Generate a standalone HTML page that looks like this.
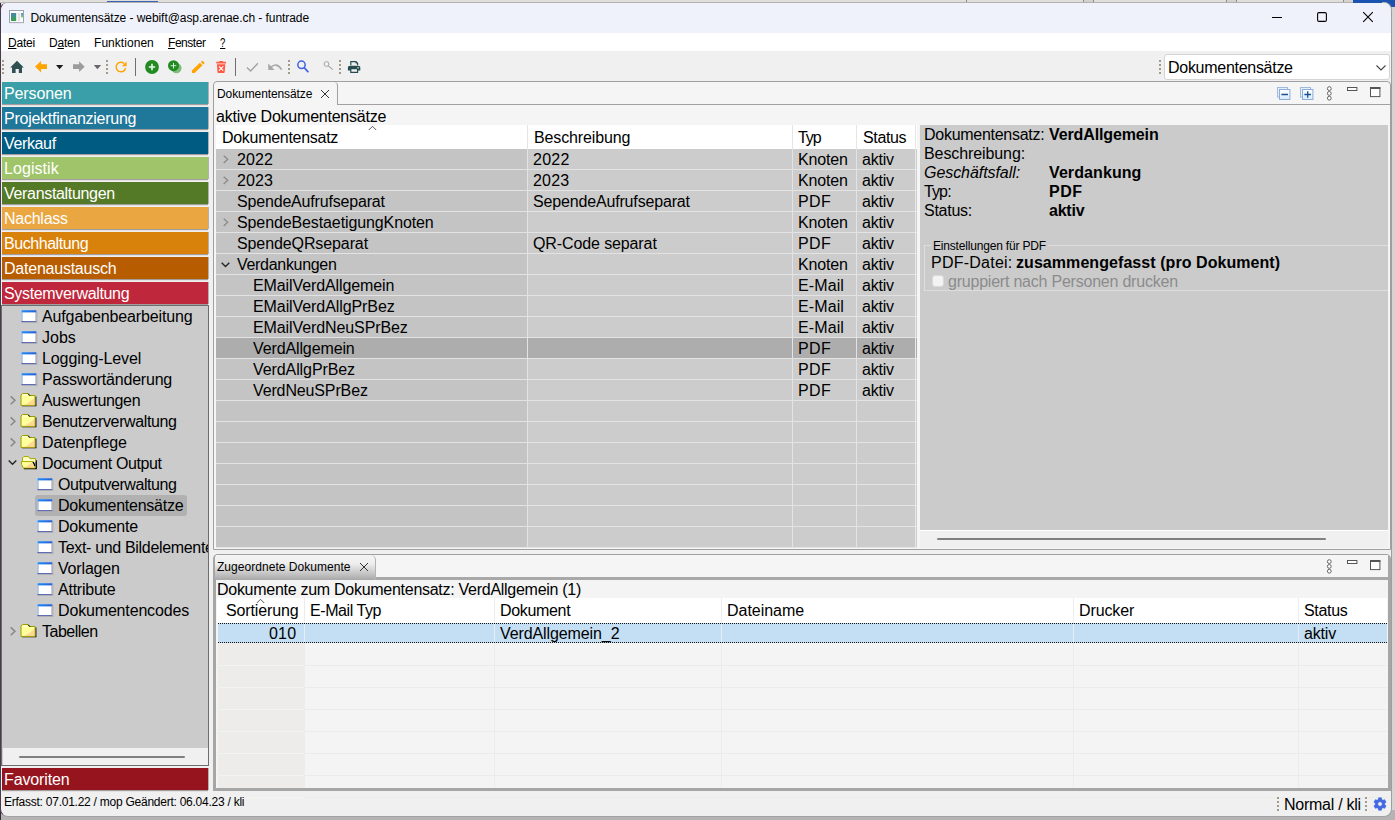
<!DOCTYPE html>
<html lang="de">
<head>
<meta charset="utf-8">
<title>Dokumentensätze - webift@asp.arenae.ch - funtrade</title>
<style>
*{box-sizing:border-box;margin:0;padding:0}
html,body{width:1395px;height:820px;overflow:hidden}
body{position:relative;background:#b4b4b4;font-family:"Liberation Sans",sans-serif;color:#000;font-size:16px;line-height:1}
.abs{position:absolute}
.ui{font-size:12px;white-space:nowrap}
.t{white-space:nowrap;font-size:16px}
/* ---------- backdrop behind window ---------- */
#backTop{left:0;top:0;width:1395px;height:8px;background:#e1dfdb}
#backTopLine{left:0;top:2px;width:1353px;height:1px;background:#bdbbb8}
#backBlueTab{left:107px;top:1px;width:51px;height:2px;background:#3c62b4}
#backBlue{left:1353px;top:0;width:42px;height:12px;background:#1a53b0}
#backRight{left:1391px;top:7px;width:4px;height:810px;background:#d6d4d2}
#backBottom{left:0;top:810px;width:1395px;height:10px;background:#b4b4b4}
#backLeft{left:0;top:3px;width:1px;height:817px;background:#3d2640}
/* ---------- window ---------- */
#win{left:0;top:2px;width:1392px;height:815px;background:#f0f0f0;border:1px solid #9e9e9e;border-left-color:#4a3a4e;border-top-color:#b4b2af;border-bottom-color:#a2a2a2;border-radius:8px;overflow:hidden}
#pg{left:-1px;top:-3px;width:1395px;height:820px}
#titlebar{left:1px;top:3px;width:1390px;height:30px;background:#eff2fa}
#menubar{left:1px;top:33px;width:1390px;height:18px;background:#fff}
#toolbar{left:1px;top:51px;width:1390px;height:30px;background:#f0f0f0}
.menu{top:37px;font-size:12px;white-space:nowrap}
.menu u{text-decoration-thickness:1px;text-underline-offset:1px}
/* ---------- sidebar ---------- */
.nav{left:2px;width:206px;height:22px;color:#fff;font-size:16px;line-height:23px;padding-left:2px;white-space:nowrap;box-shadow:0 1px 0 #a39d9d,1px 0 0 #b5afaf,0 2px 0 #e2e2e2}
#tree{left:1px;top:305px;width:208px;height:461px;background:#cbcbcb;border:1px solid #6d6d6d;overflow:hidden}
.ti{height:21px;line-height:21px;font-size:16px;white-space:nowrap}
</style>
</head>
<body>
<div class="abs" id="backTop"></div>
<div class="abs" id="backTopLine"></div>
<div class="abs" id="backBlueTab"></div>
<div class="abs" style="left:966px;top:0;width:1px;height:2px;background:#8a8a8a"></div>
<div class="abs" style="left:1083px;top:0;width:1px;height:2px;background:#8a8a8a"></div>
<div class="abs" style="left:1093px;top:0;width:1px;height:2px;background:#8a8a8a"></div>
<div class="abs" style="left:1226px;top:0;width:1px;height:2px;background:#8a8a8a"></div>
<div class="abs" style="left:1236px;top:0;width:1px;height:2px;background:#8a8a8a"></div>
<div class="abs" style="left:1343px;top:0;width:1px;height:2px;background:#8a8a8a"></div>
<div class="abs" style="left:1084px;top:0;width:9px;height:2px;background:#d4d2cf"></div>
<div class="abs" style="left:1227px;top:0;width:9px;height:2px;background:#d4d2cf"></div>
<div class="abs" style="left:1344px;top:0;width:9px;height:2px;background:#d4d2cf"></div>
<div class="abs" id="backBlue"></div>
<div class="abs" id="backRight"></div>
<div class="abs" id="backBottom"></div>
<div class="abs" id="backLeft"></div>

<div class="abs" id="win"><div class="abs" id="pg">
  <div class="abs" id="titlebar"></div>
  <div class="abs ui" style="left:30.4px;top:12px;letter-spacing:-0.061px">Dokumentensätze - webift@asp.arenae.ch - funtrade</div>
  <svg class="abs" style="left:8px;top:9px" width="18" height="16" viewBox="8 9 18 16">
    <defs><linearGradient id="tg" x1="0" y1="0" x2="0.3" y2="1"><stop offset="0" stop-color="#4a7fc4"/><stop offset="1" stop-color="#38a24e"/></linearGradient>
    <linearGradient id="tg2" x1="0" y1="0" x2="0" y2="1"><stop offset="0" stop-color="#5b8fd0"/><stop offset="0.7" stop-color="#7cc08a"/><stop offset="1" stop-color="#eef4ee"/></linearGradient></defs>
    <rect x="9.5" y="10.5" width="14" height="12" fill="#fdfdfd" stroke="#9aa2ac" stroke-width="1"/>
    <rect x="9.5" y="22.4" width="14.4" height="0.8" fill="#b9bec6"/>
    <rect x="11" y="13" width="5.2" height="8" fill="url(#tg)"/>
    <rect x="17.8" y="12.6" width="2.4" height="8.6" fill="#e2e2e2"/>
    <rect x="21" y="13" width="2" height="5" fill="url(#tg2)"/>
  </svg>
  <svg class="abs" style="left:1265px;top:8px" width="115" height="18" viewBox="1265 8 115 18">
    <path d="M1272 17.5 H1282" stroke="#000" stroke-width="1.1"/>
    <rect x="1317.6" y="12.6" width="8.8" height="8.8" rx="1.4" fill="none" stroke="#000" stroke-width="1.1"/>
    <path d="M1363.2 12.2 L1372.8 21.8 M1372.8 12.2 L1363.2 21.8" stroke="#000" stroke-width="1.1"/>
  </svg>
  <div class="abs" id="menubar"></div>
  <div class="abs menu" style="left:8px;top:37px;letter-spacing:-0.226px"><u>D</u>atei</div>
  <div class="abs menu" style="left:49px;top:37px;letter-spacing:-0.236px">D<u>a</u>ten</div>
  <div class="abs menu" style="left:94px;top:37px;letter-spacing:0.045px">Funktionen</div>
  <div class="abs menu" style="left:168px;top:37px;letter-spacing:-0.464px"><u>F</u>enster</div>
  <div class="abs menu" style="left:220px;top:37px;transform:scaleX(.8);transform-origin:left"><u>?</u></div>
  <div class="abs" id="toolbar"></div>
  <svg class="abs" style="left:0;top:51px" width="400" height="30" viewBox="0 51 400 30">
    <defs>
      <g id="grip"><rect x="0" y="60" width="2" height="2"/><rect x="0" y="64" width="2" height="2"/><rect x="0" y="68" width="2" height="2"/><rect x="0" y="72" width="2" height="2"/></g>
    </defs>
    <g fill="#a39a88"><use href="#grip" x="2"/><use href="#grip" x="106"/><use href="#grip" x="288"/><use href="#grip" x="339"/></g>
    <!-- home -->
    <path fill="#2f5050" d="M17 60.8 L23.8 67.4 L22 67.4 L22 73 L18.8 73 L18.8 69 L15.6 69 L15.6 73 L12 73 L12 67.4 L10.2 67.4 Z"/>
    <!-- back -->
    <path fill="#ffa500" d="M35 66.6 L41.1 61 L41.1 64.3 L47 64.3 L47 69 L41.1 69 L41.1 72.6 Z"/>
    <path fill="#1a1a1a" d="M56 65 L63.2 65 L59.6 69.2 Z"/>
    <!-- forward -->
    <path fill="#9c9c9c" d="M84.7 66.7 L79.1 61.3 L79.1 64.3 L73 64.3 L73 69 L79.1 69 L79.1 72.1 Z"/>
    <path fill="#66666c" d="M93.8 65 L101.1 65 L97.4 69.2 Z"/>
    <!-- refresh -->
    <path fill="none" stroke="#ffa500" stroke-width="1.5" d="M125.6 68.2 A4.8 4.8 0 1 1 124.2 63.5"/>
    <path fill="#ffa500" d="M126.6 61.6 L126.6 66.2 L121.9 66.2 Z"/>
    <!-- sep -->
    <rect x="135" y="58" width="1" height="18" fill="#6e6e6e"/>
    <!-- add -->
    <circle cx="152" cy="67" r="6.9" fill="#228b22"/>
    <path stroke="#eef8ee" stroke-width="1.6" d="M148.8 67 H155.2 M152 63.8 V70.2"/>
    <!-- add copy -->
    <circle cx="176.4" cy="68.1" r="5.2" fill="#7fba7f"/>
    <circle cx="173.5" cy="65.7" r="5.5" fill="#228b22"/>
    <path stroke="#e8f5e8" stroke-width="0.9" d="M170.7 65.7 H176.3 M173.5 62.9 V68.5"/>
    <!-- pencil -->
    <path fill="#ffa500" d="M191.9 73 L191.9 70.4 L199.9 62.7 L202.6 65.3 L194.6 73 Z M200.8 61.9 L201.9 60.9 Q202.4 60.5 202.9 61 L204.4 62.4 Q204.9 62.9 204.4 63.4 L203.4 64.4 Z"/>
    <!-- trash -->
    <path fill="#ff5a44" d="M219.3 60.9 H222.9 V61.8 H225.9 V63.4 H216.3 V61.8 H219.3 Z M216.9 64.2 H225.3 L224.7 72.2 Q224.6 73 223.8 73 H218.4 Q217.6 73 217.5 72.2 Z"/>
    <path stroke="#fff" stroke-width="1.2" d="M219 66.4 L223.2 70.7 M223.2 66.4 L219 70.7"/>
    <!-- sep -->
    <rect x="235" y="58" width="1" height="18" fill="#6e6e6e"/>
    <!-- check -->
    <path fill="none" stroke="#a2a2a2" stroke-width="1.4" d="M246.9 67.6 L250.6 71 L257.9 63.3"/>
    <!-- undo -->
    <path fill="none" stroke="#a8a8a8" stroke-width="1.6" d="M270.6 67.6 Q276.6 61.6 281.6 69.6"/>
    <path fill="#a8a8a8" d="M268.2 63.6 L268.2 70 L274.6 70 Z"/>
    <!-- search -->
    <circle cx="301.5" cy="64.8" r="3.7" fill="none" stroke="#3f62e6" stroke-width="1.5"/>
    <path stroke="#3f62e6" stroke-width="1.7" d="M304.2 67.6 L308.4 72.3"/>
    <circle cx="326.5" cy="64" r="2.4" fill="none" stroke="#a4a4a4" stroke-width="1"/>
    <path stroke="#a4a4a4" stroke-width="1.1" d="M328.3 65.8 L332.8 69.6"/>
    <!-- printer -->
    <path fill="#264d4d" d="M350.2 61 H356.2 L358.2 63 V65.4 H350.2 Z M349.4 66 H358.9 Q360.3 66 360.3 67.4 V70.6 H358.2 V72.9 H350.2 V70.6 H347.9 V67.4 Q347.9 66 349.4 66 Z"/>
    <path fill="#f0f0f0" d="M351.4 62.2 H355.6 V63.6 H357 V65.4 H351.4 Z M351.4 69.3 H357 V71.7 H351.4 Z"/>
    <rect x="357.4" y="67.2" width="1.4" height="1.2" fill="#f0f0f0"/>
  </svg>
  <!-- combo -->
  <svg class="abs" style="left:1159px;top:59px" width="3" height="16" viewBox="0 59 3 16"><g fill="#a39a88"><rect x="0" y="60" width="2" height="2"/><rect x="0" y="64" width="2" height="2"/><rect x="0" y="68" width="2" height="2"/><rect x="0" y="72" width="2" height="2"/></g></svg>
  <div class="abs" style="left:1164px;top:54px;width:226px;height:26px;background:#fff;border:1px solid #d4d4d4;border-radius:3px"></div>
  <div class="abs t" style="left:1168px;top:60px;letter-spacing:-0.282px">Dokumentensätze</div>
  <svg class="abs" style="left:1375px;top:64px" width="12" height="8" viewBox="0 0 12 8"><path d="M1.5 1.5 L6 6 L10.5 1.5" fill="none" stroke="#444" stroke-width="1.1"/></svg>
  <div class="abs nav" style="top:82px;background:#3a9fa8;letter-spacing:-0.108px">Personen</div>
  <div class="abs nav" style="top:107px;background:#1f7799;letter-spacing:-0.247px">Projektfinanzierung</div>
  <div class="abs nav" style="top:132px;background:#005b82;letter-spacing:-0.361px">Verkauf</div>
  <div class="abs nav" style="top:157px;background:#a0c46a;letter-spacing:0.061px">Logistik</div>
  <div class="abs nav" style="top:182px;background:#557a27;letter-spacing:-0.321px">Veranstaltungen</div>
  <div class="abs nav" style="top:207px;background:#eaa640;letter-spacing:-0.247px">Nachlass</div>
  <div class="abs nav" style="top:232px;background:#d8820c;letter-spacing:-0.443px">Buchhaltung</div>
  <div class="abs nav" style="top:257px;background:#b85c00;letter-spacing:-0.23px">Datenaustausch</div>
  <div class="abs nav" style="top:282px;background:#bf273c;letter-spacing:-0.346px">Systemverwaltung</div>
  <div class="abs" id="tree"></div>
  <svg width="0" height="0" style="position:absolute">
    <defs>
      <linearGradient id="wb" x1="0" y1="0" x2="1" y2="0"><stop offset="0" stop-color="#1f8af5"/><stop offset="1" stop-color="#2a5fd0"/></linearGradient>
      <g id="icoWin">
        <rect x="0" y="0" width="15" height="12" fill="#fff"/>
        <rect x="0" y="0" width="15" height="2.2" fill="url(#wb)"/>
        <rect x="0" y="2" width="1" height="10" fill="#7f9fd6"/>
        <rect x="0" y="11" width="15" height="1" fill="#3a4aa0"/>
        <rect x="14" y="2" width="1" height="10" fill="#8c94b4"/>
        <rect x="15" y="1" width="0.8" height="11.6" fill="#a9a9a9"/>
        <rect x="1" y="12" width="14.8" height="0.6" fill="#a9a9a9"/>
      </g>
      <g id="icoFolder">
        <path d="M1.6 13.3 H15.9 V3.4 H14.9 V12.4 H1.6 Z" fill="#000"/>
        <path d="M0.5 12.4 V2 L2 0.5 H7.2 L8.6 2.5 H14.5 V12.4 Z" fill="#ffff9c" stroke="#9c9c00" stroke-width="1"/>
        <path d="M1.4 2.4 L2.4 1.4 H6.8 L7.6 2.6 H1.4 Z" fill="#ffffe0"/>
        <path d="M7.6 0.6 L9.4 2.6" stroke="#000" stroke-width="1"/>
        <path d="M14 5 V11.9 H4.5 Z" fill="#ffc08a" opacity=".6"/>
      </g>
      <g id="icoFolderOpen">
        <path d="M3 13.2 H16 V4.2 H14.6 V12 H3 Z" fill="#000"/>
        <path d="M1.6 7 V2 L3 0.6 H7.6 L9 2.6 H14.6 V6" fill="#ffffc8" stroke="#a8a800" stroke-width="1"/>
        <path d="M0.6 5.6 H11.8 L13.4 8 L14.4 12 H2.6 L0.6 8.4 Z" fill="#ffff99" stroke="#a8a800" stroke-width="1"/>
        <path d="M11.2 6.4 L13.6 11.4 H4 Z" fill="#ffc890" opacity=".8"/>
        <path d="M12 5.8 L13.4 8.2 L13.8 10" stroke="#000" stroke-width="1.2" fill="none"/>
      </g>
      <path id="chevR" d="M0.7 0.4 L4.9 4.3 L0.7 8.2" fill="none" stroke="#878787" stroke-width="1.5"/>
      <path id="chevD" d="M0.7 0.7 L4.5 4.5 L8.3 0.7" fill="none" stroke="#262626" stroke-width="1.4"/>
    </defs>
  </svg>
  <div class="abs" id="treeIn" style="left:3px;top:306px;width:205px;height:442px;overflow:hidden">
    <div class="abs" style="left:32px;top:189px;width:152px;height:21px;background:#b1b1b1;border-radius:3px"></div>
    <svg class="abs" style="left:0;top:0" width="205" height="442" viewBox="3 306 205 442">
      <use href="#icoWin" x="21.5" y="310.2"/>
      <use href="#icoWin" x="21.5" y="331.2"/>
      <use href="#icoWin" x="21.5" y="352.2"/>
      <use href="#icoWin" x="21.5" y="373.2"/>
      <use href="#chevR" x="10" y="396"/><use href="#icoFolder" x="20.5" y="393"/>
      <use href="#chevR" x="10" y="417"/><use href="#icoFolder" x="20.5" y="414"/>
      <use href="#chevR" x="10" y="438"/><use href="#icoFolder" x="20.5" y="435"/>
      <use href="#chevD" x="8" y="459.8"/><use href="#icoFolderOpen" x="20.9" y="456"/>
      <use href="#icoWin" x="37.5" y="478.2"/>
      <use href="#icoWin" x="37.5" y="499.2"/>
      <use href="#icoWin" x="37.5" y="520.2"/>
      <use href="#icoWin" x="37.5" y="541.2"/>
      <use href="#icoWin" x="37.5" y="562.2"/>
      <use href="#icoWin" x="37.5" y="583.2"/>
      <use href="#icoWin" x="37.5" y="604.2"/>
      <use href="#chevR" x="10" y="627"/><use href="#icoFolder" x="20.5" y="624"/>
    </svg>
    <div class="abs ti" style="left:39px;top:0px;letter-spacing:-0.133px">Aufgabenbearbeitung</div>
    <div class="abs ti" style="left:39px;top:21px;letter-spacing:-0.006px">Jobs</div>
    <div class="abs ti" style="left:39px;top:42px;letter-spacing:-0.096px">Logging-Level</div>
    <div class="abs ti" style="left:39px;top:63px;letter-spacing:-0.212px">Passwortänderung</div>
    <div class="abs ti" style="left:39px;top:84px;letter-spacing:-0.341px">Auswertungen</div>
    <div class="abs ti" style="left:39px;top:105px;letter-spacing:-0.381px">Benutzerverwaltung</div>
    <div class="abs ti" style="left:39px;top:126px;letter-spacing:-0.128px">Datenpflege</div>
    <div class="abs ti" style="left:39px;top:147px;letter-spacing:-0.384px">Document Output</div>
    <div class="abs ti" style="left:55px;top:168px;letter-spacing:-0.432px">Outputverwaltung</div>
    <div class="abs ti" style="left:55px;top:189px;letter-spacing:-0.239px">Dokumentensätze</div>
    <div class="abs ti" style="left:55px;top:210px;letter-spacing:-0.201px">Dokumente</div>
    <div class="abs ti" style="left:55px;top:231px;letter-spacing:-0.325px">Text- und Bildelemente</div>
    <div class="abs ti" style="left:55px;top:252px;letter-spacing:-0.173px">Vorlagen</div>
    <div class="abs ti" style="left:55px;top:273px;letter-spacing:-0.234px">Attribute</div>
    <div class="abs ti" style="left:55px;top:294px;letter-spacing:-0.16px">Dokumentencodes</div>
    <div class="abs ti" style="left:39px;top:315px;letter-spacing:-0.505px">Tabellen</div>
  </div>
  <div class="abs" style="left:3px;top:748px;width:205px;height:17px;background:#f0f0f0"></div>
  <div class="abs" style="left:19px;top:756px;width:166px;height:2px;background:#808080;border-radius:1px"></div>
  <div class="abs nav" style="top:768px;background:#96141e;letter-spacing:-0.132px">Favoriten</div>
  <div class="abs" style="left:213px;top:81px;width:1178px;height:469px;background:#f5f5f5;border:1px solid #a0a0a0;border-radius:4px 4px 0 0"></div>
  <div class="abs" style="left:337px;top:104px;width:1053px;height:1px;background:#a0a0a0"></div>
  <div class="abs" style="left:214px;top:82px;width:124px;height:23px;border-right:1px solid #a0a0a0;border-top-right-radius:4px"></div>
  <div class="abs ui" style="left:217px;top:88px;letter-spacing:-0.092px">Dokumentensätze</div>
  <svg class="abs" style="left:320px;top:89px" width="10" height="10" viewBox="0 0 10 10"><path d="M1 1 L9 9 M9 1 L1 9" stroke="#333" stroke-width="1"/></svg>
  <svg class="abs" style="left:1270px;top:82px" width="120" height="22" viewBox="1270 82 120 22"><defs><linearGradient id="sq" x1="0" y1="0" x2="0" y2="1"><stop offset="0" stop-color="#fff"/><stop offset="1" stop-color="#d4ebff"/></linearGradient></defs><rect x="1277.5" y="87.5" width="10" height="9.6" fill="#e4f1fd" stroke="#a2bbdd" stroke-width="1"/><rect x="1279.5" y="89.5" width="10.4" height="10" fill="url(#sq)" stroke="#8facd6" stroke-width="1"/><path d="M1281.4 94.5 H1288" stroke="#1c4f8f" stroke-width="1.3"/><rect x="1300.5" y="87.5" width="10" height="9.6" fill="#e4f1fd" stroke="#a2bbdd" stroke-width="1"/><rect x="1302.5" y="89.5" width="10.4" height="10" fill="url(#sq)" stroke="#8facd6" stroke-width="1"/><path d="M1304.4 94.5 H1311" stroke="#1c4f8f" stroke-width="1.3"/><path d="M1307.7 91.2 V97.8" stroke="#1c4f8f" stroke-width="1.3"/><circle cx="1329.3" cy="88.6" r="1.9" fill="#fff" stroke="#555" stroke-width="0.9"/><circle cx="1329.3" cy="93.4" r="1.9" fill="#fff" stroke="#555" stroke-width="0.9"/><circle cx="1329.3" cy="98.2" r="1.9" fill="#fff" stroke="#555" stroke-width="0.9"/><rect x="1347.5" y="87.5" width="9.4" height="3" fill="#fff" stroke="#555" stroke-width="1"/><rect x="1370.5" y="88" width="9.4" height="8.6" fill="#fff" stroke="#555" stroke-width="1"/><rect x="1370" y="87" width="10.4" height="2" fill="#555"/></svg>
  <div class="abs t" style="left:216px;top:107px;line-height:19px;letter-spacing:-0.233px">aktive Dokumentensätze</div>
  <div class="abs" style="left:216px;top:125px;width:701px;height:24px;background:#fff"></div>
  <div class="abs" style="left:527px;top:125px;width:1px;height:24px;background:#e5e5e5"></div>
  <div class="abs" style="left:792px;top:125px;width:1px;height:24px;background:#e5e5e5"></div>
  <div class="abs" style="left:856px;top:125px;width:1px;height:24px;background:#e5e5e5"></div>
  <div class="abs" style="left:915px;top:125px;width:1px;height:24px;background:#e5e5e5"></div>
  <div class="abs t" style="left:222px;top:126px;line-height:24px;letter-spacing:-0.29px">Dokumentensatz</div>
  <div class="abs t" style="left:534px;top:126px;line-height:24px;letter-spacing:-0.138px">Beschreibung</div>
  <div class="abs t" style="left:798px;top:126px;line-height:24px;letter-spacing:-1.05px">Typ</div>
  <div class="abs t" style="left:863px;top:126px;line-height:24px;letter-spacing:-0.356px">Status</div>
  <svg class="abs" style="left:368px;top:125px" width="9" height="6" viewBox="0 0 9 6"><path d="M0.8 5 L4.5 1.3 L8.2 5" fill="none" stroke="#555" stroke-width="1"/></svg>
  <div class="abs" style="left:216px;top:149px;width:311px;height:399px;background:#c4c4c4"></div>
  <div class="abs" style="left:528px;top:149px;width:387px;height:399px;background:#cccccc"></div>
  <div class="abs" style="left:216px;top:338px;width:699px;height:20px;background:#adadad"></div>
  <div class="abs" style="left:216px;top:169px;width:699px;height:1px;background:#e3e3e3"></div>
  <div class="abs" style="left:216px;top:190px;width:699px;height:1px;background:#e3e3e3"></div>
  <div class="abs" style="left:216px;top:211px;width:699px;height:1px;background:#e3e3e3"></div>
  <div class="abs" style="left:216px;top:232px;width:699px;height:1px;background:#e3e3e3"></div>
  <div class="abs" style="left:216px;top:253px;width:699px;height:1px;background:#e3e3e3"></div>
  <div class="abs" style="left:216px;top:274px;width:699px;height:1px;background:#e3e3e3"></div>
  <div class="abs" style="left:216px;top:295px;width:699px;height:1px;background:#e3e3e3"></div>
  <div class="abs" style="left:216px;top:316px;width:699px;height:1px;background:#e3e3e3"></div>
  <div class="abs" style="left:216px;top:337px;width:699px;height:1px;background:#e3e3e3"></div>
  <div class="abs" style="left:216px;top:358px;width:699px;height:1px;background:#e3e3e3"></div>
  <div class="abs" style="left:216px;top:379px;width:699px;height:1px;background:#e3e3e3"></div>
  <div class="abs" style="left:216px;top:400px;width:699px;height:1px;background:#e3e3e3"></div>
  <div class="abs" style="left:216px;top:421px;width:699px;height:1px;background:#e3e3e3"></div>
  <div class="abs" style="left:216px;top:442px;width:699px;height:1px;background:#e3e3e3"></div>
  <div class="abs" style="left:216px;top:463px;width:699px;height:1px;background:#e3e3e3"></div>
  <div class="abs" style="left:216px;top:484px;width:699px;height:1px;background:#e3e3e3"></div>
  <div class="abs" style="left:216px;top:505px;width:699px;height:1px;background:#e3e3e3"></div>
  <div class="abs" style="left:216px;top:526px;width:699px;height:1px;background:#e3e3e3"></div>
  <div class="abs" style="left:216px;top:547px;width:699px;height:1px;background:#e3e3e3"></div>
  <div class="abs" style="left:527px;top:149px;width:1px;height:399px;background:#e3e3e3"></div>
  <div class="abs" style="left:792px;top:149px;width:1px;height:399px;background:#e3e3e3"></div>
  <div class="abs" style="left:856px;top:149px;width:1px;height:399px;background:#e3e3e3"></div>
  <div class="abs" style="left:915px;top:149px;width:1px;height:399px;background:#e9e9e9"></div>
  <div class="abs" style="left:916px;top:149px;width:1px;height:399px;background:#cccccc"></div>
  <div class="abs" style="left:916px;top:169px;width:1px;height:1px;background:#e3e3e3"></div>
  <div class="abs" style="left:916px;top:190px;width:1px;height:1px;background:#e3e3e3"></div>
  <div class="abs" style="left:916px;top:211px;width:1px;height:1px;background:#e3e3e3"></div>
  <div class="abs" style="left:916px;top:232px;width:1px;height:1px;background:#e3e3e3"></div>
  <div class="abs" style="left:916px;top:253px;width:1px;height:1px;background:#e3e3e3"></div>
  <div class="abs" style="left:916px;top:274px;width:1px;height:1px;background:#e3e3e3"></div>
  <div class="abs" style="left:916px;top:295px;width:1px;height:1px;background:#e3e3e3"></div>
  <div class="abs" style="left:916px;top:316px;width:1px;height:1px;background:#e3e3e3"></div>
  <div class="abs" style="left:916px;top:337px;width:1px;height:1px;background:#e3e3e3"></div>
  <div class="abs" style="left:916px;top:358px;width:1px;height:1px;background:#e3e3e3"></div>
  <div class="abs" style="left:916px;top:379px;width:1px;height:1px;background:#e3e3e3"></div>
  <div class="abs" style="left:916px;top:400px;width:1px;height:1px;background:#e3e3e3"></div>
  <div class="abs" style="left:916px;top:421px;width:1px;height:1px;background:#e3e3e3"></div>
  <div class="abs" style="left:916px;top:442px;width:1px;height:1px;background:#e3e3e3"></div>
  <div class="abs" style="left:916px;top:463px;width:1px;height:1px;background:#e3e3e3"></div>
  <div class="abs" style="left:916px;top:484px;width:1px;height:1px;background:#e3e3e3"></div>
  <div class="abs" style="left:916px;top:505px;width:1px;height:1px;background:#e3e3e3"></div>
  <div class="abs" style="left:916px;top:526px;width:1px;height:1px;background:#e3e3e3"></div>
  <div class="abs" style="left:916px;top:547px;width:1px;height:1px;background:#e3e3e3"></div>
  <div class="abs" style="left:916px;top:338px;width:1px;height:20px;background:#adadad"></div>
  <div class="abs t" style="left:237px;top:149px;line-height:21px;letter-spacing:0.137px">2022</div>
  <div class="abs t" style="left:533px;top:149px;line-height:21px;letter-spacing:0.237px">2022</div>
  <div class="abs t" style="left:798px;top:149px;line-height:21px;letter-spacing:-0.154px">Knoten</div>
  <div class="abs t" style="left:862px;top:149px;line-height:21px;letter-spacing:-0.236px">aktiv</div>
  <svg class="abs" style="left:223px;top:155px" width="6" height="9" viewBox="0 0 6 9"><path d="M0.7 0.7 L4.7 4.3 L0.7 7.9" fill="none" stroke="#8a8a8a" stroke-width="1.3"/></svg>
  <div class="abs t" style="left:237px;top:170px;line-height:21px;letter-spacing:0.103px">2023</div>
  <div class="abs t" style="left:533px;top:170px;line-height:21px;letter-spacing:0.203px">2023</div>
  <div class="abs t" style="left:798px;top:170px;line-height:21px;letter-spacing:-0.154px">Knoten</div>
  <div class="abs t" style="left:862px;top:170px;line-height:21px;letter-spacing:-0.236px">aktiv</div>
  <svg class="abs" style="left:223px;top:176px" width="6" height="9" viewBox="0 0 6 9"><path d="M0.7 0.7 L4.7 4.3 L0.7 7.9" fill="none" stroke="#8a8a8a" stroke-width="1.3"/></svg>
  <div class="abs t" style="left:237px;top:191px;line-height:21px;letter-spacing:-0.178px">SpendeAufrufseparat</div>
  <div class="abs t" style="left:533px;top:191px;line-height:21px;letter-spacing:-0.163px">SependeAufrufseparat</div>
  <div class="abs t" style="left:798px;top:191px;line-height:21px;letter-spacing:0.37px">PDF</div>
  <div class="abs t" style="left:862px;top:191px;line-height:21px;letter-spacing:-0.236px">aktiv</div>
  <div class="abs t" style="left:237px;top:212px;line-height:21px;letter-spacing:-0.111px">SpendeBestaetigungKnoten</div>
  <div class="abs t" style="left:798px;top:212px;line-height:21px;letter-spacing:-0.154px">Knoten</div>
  <div class="abs t" style="left:862px;top:212px;line-height:21px;letter-spacing:-0.236px">aktiv</div>
  <svg class="abs" style="left:223px;top:218px" width="6" height="9" viewBox="0 0 6 9"><path d="M0.7 0.7 L4.7 4.3 L0.7 7.9" fill="none" stroke="#8a8a8a" stroke-width="1.3"/></svg>
  <div class="abs t" style="left:237px;top:233px;line-height:21px;letter-spacing:-0.101px">SpendeQRseparat</div>
  <div class="abs t" style="left:533px;top:233px;line-height:21px;letter-spacing:-0.112px">QR-Code separat</div>
  <div class="abs t" style="left:798px;top:233px;line-height:21px;letter-spacing:0.37px">PDF</div>
  <div class="abs t" style="left:862px;top:233px;line-height:21px;letter-spacing:-0.236px">aktiv</div>
  <div class="abs t" style="left:237px;top:254px;line-height:21px;letter-spacing:-0.304px">Verdankungen</div>
  <div class="abs t" style="left:798px;top:254px;line-height:21px;letter-spacing:-0.154px">Knoten</div>
  <div class="abs t" style="left:862px;top:254px;line-height:21px;letter-spacing:-0.236px">aktiv</div>
  <svg class="abs" style="left:221px;top:262px" width="10" height="6" viewBox="0 0 10 6"><path d="M0.7 0.7 L4.5 4.5 L8.3 0.7" fill="none" stroke="#262626" stroke-width="1.4"/></svg>
  <div class="abs t" style="left:253px;top:275px;line-height:21px;letter-spacing:-0.101px">EMailVerdAllgemein</div>
  <div class="abs t" style="left:798px;top:275px;line-height:21px;letter-spacing:0.107px">E-Mail</div>
  <div class="abs t" style="left:862px;top:275px;line-height:21px;letter-spacing:-0.236px">aktiv</div>
  <div class="abs t" style="left:253px;top:296px;line-height:21px;letter-spacing:-0.086px">EMailVerdAllgPrBez</div>
  <div class="abs t" style="left:798px;top:296px;line-height:21px;letter-spacing:0.107px">E-Mail</div>
  <div class="abs t" style="left:862px;top:296px;line-height:21px;letter-spacing:-0.236px">aktiv</div>
  <div class="abs t" style="left:253px;top:317px;line-height:21px;letter-spacing:-0.1px">EMailVerdNeuSPrBez</div>
  <div class="abs t" style="left:798px;top:317px;line-height:21px;letter-spacing:0.107px">E-Mail</div>
  <div class="abs t" style="left:862px;top:317px;line-height:21px;letter-spacing:-0.236px">aktiv</div>
  <div class="abs t" style="left:253px;top:338px;line-height:21px;letter-spacing:-0.118px">VerdAllgemein</div>
  <div class="abs t" style="left:798px;top:338px;line-height:21px;letter-spacing:0.37px">PDF</div>
  <div class="abs t" style="left:862px;top:338px;line-height:21px;letter-spacing:-0.236px">aktiv</div>
  <div class="abs t" style="left:253px;top:359px;line-height:21px;letter-spacing:-0.088px">VerdAllgPrBez</div>
  <div class="abs t" style="left:798px;top:359px;line-height:21px;letter-spacing:0.37px">PDF</div>
  <div class="abs t" style="left:862px;top:359px;line-height:21px;letter-spacing:-0.236px">aktiv</div>
  <div class="abs t" style="left:253px;top:380px;line-height:21px;letter-spacing:-0.133px">VerdNeuSPrBez</div>
  <div class="abs t" style="left:798px;top:380px;line-height:21px;letter-spacing:0.37px">PDF</div>
  <div class="abs t" style="left:862px;top:380px;line-height:21px;letter-spacing:-0.236px">aktiv</div>
  <div class="abs" style="left:920px;top:125px;width:468px;height:405px;background:#cbcbcb;overflow:hidden">
    <div class="abs" style="left:4px;top:120px;width:480px;height:46px;border:1px solid #dedede"></div>
    <div class="abs" style="left:11px;top:113px;width:117px;height:14px;background:#cbcbcb"></div>
    <div class="abs" style="left:12px;top:150px;width:12px;height:12px;background:#f3f3f3;border:1px solid #d9d9d9;border-radius:3px"></div>
  </div>
  <div class="abs ui" style="left:933px;top:240px;letter-spacing:-0.182px">Einstellungen für PDF</div>
  <div class="abs t" style="left:924px;top:125px;line-height:19px;letter-spacing:-0.275px">Dokumentensatz:</div>
  <div class="abs t" style="left:1049px;top:125px;line-height:19px;font-weight:bold;letter-spacing:-0.12px">VerdAllgemein</div>
  <div class="abs t" style="left:924px;top:144px;line-height:19px;letter-spacing:-0.094px">Beschreibung:</div>
  <div class="abs t" style="left:924px;top:163px;line-height:19px;font-style:italic;letter-spacing:-0.061px">Geschäftsfall:</div>
  <div class="abs t" style="left:1049px;top:163px;line-height:19px;font-weight:bold;letter-spacing:0.09px">Verdankung</div>
  <div class="abs t" style="left:924px;top:182px;line-height:19px;letter-spacing:-0.885px">Typ:</div>
  <div class="abs t" style="left:1049px;top:182px;line-height:19px;font-weight:bold;letter-spacing:0.493px">PDF</div>
  <div class="abs t" style="left:924px;top:201px;line-height:19px;letter-spacing:-0.257px">Status:</div>
  <div class="abs t" style="left:1049px;top:201px;line-height:19px;font-weight:bold;letter-spacing:-0.225px">aktiv</div>
  <div class="abs t" style="left:931px;top:253px;line-height:19px;letter-spacing:0.237px">PDF-Datei:</div>
  <div class="abs t" style="left:1016px;top:253px;line-height:19px;font-weight:bold;letter-spacing:0.063px">zusammengefasst (pro Dokument)</div>
  <div class="abs t" style="left:948px;top:272px;line-height:19px;letter-spacing:-0.218px;color:#8b8b8b">gruppiert nach Personen drucken</div>
  <div class="abs" style="left:920px;top:530px;width:468px;height:1px;background:#fff"></div>
  <div class="abs" style="left:920px;top:531px;width:468px;height:17px;background:#f0f0f0"></div>
  <div class="abs" style="left:937px;top:538px;width:389px;height:2px;background:#808080;border-radius:1px"></div>
  <div class="abs" style="left:213px;top:554px;width:1178px;height:237px;background:#f4f4f4;border:3px solid #a6a6a6;border-top:1px solid #a0a0a0;border-radius:5px 5px 0 0"></div>
  <div class="abs" style="left:216px;top:555px;width:1172px;height:22px;background:#f5f5f5"></div>
  <div class="abs" style="left:216px;top:577px;width:1172px;height:3px;background:#a8a8a8"></div>
  <div class="abs" style="left:215px;top:555px;width:161px;height:25px;background:linear-gradient(#f4f4f4 0%,#eeeeee 35%,#c4c4c4 75%,#a8a8a8 100%);border-top-right-radius:5px;border-top-left-radius:3px;border-right:1px solid #b4b4b4"></div>
  <div class="abs ui" style="left:217px;top:561px;letter-spacing:0.039px">Zugeordnete Dokumente</div>
  <svg class="abs" style="left:359px;top:562px" width="10" height="10" viewBox="0 0 10 10"><path d="M1 1 L9 9 M9 1 L1 9" stroke="#333" stroke-width="1"/></svg>
  <svg class="abs" style="left:1270px;top:555px" width="120" height="22" viewBox="1270 82 120 22"><circle cx="1329.3" cy="88.6" r="1.9" fill="#fff" stroke="#555" stroke-width="0.9"/><circle cx="1329.3" cy="93.4" r="1.9" fill="#fff" stroke="#555" stroke-width="0.9"/><circle cx="1329.3" cy="98.2" r="1.9" fill="#fff" stroke="#555" stroke-width="0.9"/><rect x="1347.5" y="87.5" width="9.4" height="3" fill="#fff" stroke="#555" stroke-width="1"/><rect x="1370.5" y="88" width="9.4" height="8.6" fill="#fff" stroke="#555" stroke-width="1"/><rect x="1370" y="87" width="10.4" height="2" fill="#555"/></svg>
  <div class="abs t" style="left:217px;top:580px;line-height:19px;letter-spacing:-0.277px">Dokumente zum Dokumentensatz: VerdAllgemein (1)</div>
  <div class="abs" style="left:217px;top:598px;width:1170px;height:25px;background:#fff"></div>
  <div class="abs" style="left:218px;top:643px;width:86px;height:145px;background:#edecea"></div>
  <div class="abs" style="left:217px;top:665px;width:1170px;height:1px;background:#ebebea"></div>
  <div class="abs" style="left:218px;top:665px;width:86px;height:1px;background:#f3f3f2"></div>
  <div class="abs" style="left:217px;top:687px;width:1170px;height:1px;background:#ebebea"></div>
  <div class="abs" style="left:218px;top:687px;width:86px;height:1px;background:#f3f3f2"></div>
  <div class="abs" style="left:217px;top:709px;width:1170px;height:1px;background:#ebebea"></div>
  <div class="abs" style="left:218px;top:709px;width:86px;height:1px;background:#f3f3f2"></div>
  <div class="abs" style="left:217px;top:731px;width:1170px;height:1px;background:#ebebea"></div>
  <div class="abs" style="left:218px;top:731px;width:86px;height:1px;background:#f3f3f2"></div>
  <div class="abs" style="left:217px;top:753px;width:1170px;height:1px;background:#ebebea"></div>
  <div class="abs" style="left:218px;top:753px;width:86px;height:1px;background:#f3f3f2"></div>
  <div class="abs" style="left:217px;top:775px;width:1170px;height:1px;background:#ebebea"></div>
  <div class="abs" style="left:218px;top:775px;width:86px;height:1px;background:#f3f3f2"></div>
  <div class="abs" style="left:217px;top:797px;width:1170px;height:1px;background:#ebebea"></div>
  <div class="abs" style="left:218px;top:797px;width:86px;height:1px;background:#f3f3f2"></div>
  <div class="abs" style="left:304px;top:598px;width:1px;height:190px;background:#ececec"></div>
  <div class="abs" style="left:494px;top:598px;width:1px;height:190px;background:#ececec"></div>
  <div class="abs" style="left:721px;top:598px;width:1px;height:190px;background:#ececec"></div>
  <div class="abs" style="left:1073px;top:598px;width:1px;height:190px;background:#ececec"></div>
  <div class="abs" style="left:1298px;top:598px;width:1px;height:190px;background:#ececec"></div>
  <div class="abs" style="left:218px;top:623px;width:1169px;height:20px;background:#c4def4;border-top:1px dotted #111;border-bottom:1px dotted #111"></div>
  <div class="abs" style="left:304px;top:624px;width:1px;height:18px;background:#e4eef8"></div>
  <div class="abs" style="left:494px;top:624px;width:1px;height:18px;background:#e4eef8"></div>
  <div class="abs" style="left:721px;top:624px;width:1px;height:18px;background:#e4eef8"></div>
  <div class="abs" style="left:1073px;top:624px;width:1px;height:18px;background:#e4eef8"></div>
  <div class="abs" style="left:1298px;top:624px;width:1px;height:18px;background:#e4eef8"></div>
  <div class="abs t" style="left:226px;top:599px;line-height:24px;letter-spacing:-0.132px">Sortierung</div>
  <div class="abs t" style="left:310px;top:599px;line-height:24px;letter-spacing:-0.42px">E-Mail Typ</div>
  <div class="abs t" style="left:500px;top:599px;line-height:24px;letter-spacing:-0.329px">Dokument</div>
  <div class="abs t" style="left:727px;top:599px;line-height:24px;letter-spacing:-0.033px">Dateiname</div>
  <div class="abs t" style="left:1079px;top:599px;line-height:24px;letter-spacing:-0.124px">Drucker</div>
  <div class="abs t" style="left:1304px;top:599px;line-height:24px;letter-spacing:-0.316px">Status</div>
  <svg class="abs" style="left:256px;top:598px" width="9" height="6" viewBox="0 0 9 6"><path d="M0.8 5 L4.5 1.3 L8.2 5" fill="none" stroke="#555" stroke-width="1"/></svg>
  <div class="abs t" style="left:269px;top:623px;line-height:21px;letter-spacing:0.165px">010</div>
  <div class="abs t" style="left:500px;top:623px;line-height:21px;letter-spacing:-0.103px">VerdAllgemein_2</div>
  <div class="abs t" style="left:1304px;top:623px;line-height:21px;letter-spacing:-0.186px">aktiv</div>
  <div class="abs ui" style="left:4px;top:796px;letter-spacing:-0.248px">Erfasst: 07.01.22 / mop Geändert: 06.04.23 / kli</div>
  <svg class="abs" style="left:1277px;top:796px" width="3" height="16" viewBox="0 59 3 16"><g fill="#a39a88"><rect x="0" y="60" width="2" height="2"/><rect x="0" y="64" width="2" height="2"/><rect x="0" y="68" width="2" height="2"/><rect x="0" y="72" width="2" height="2"/></g></svg>
  <svg class="abs" style="left:1365px;top:796px" width="3" height="16" viewBox="0 59 3 16"><g fill="#a39a88"><rect x="0" y="60" width="2" height="2"/><rect x="0" y="64" width="2" height="2"/><rect x="0" y="68" width="2" height="2"/><rect x="0" y="72" width="2" height="2"/></g></svg>
  <div class="abs t" style="left:1284px;top:795px;line-height:19px;letter-spacing:-0.266px">Normal / kli</div>
  <svg class="abs" style="left:1372px;top:796px" width="16" height="16" viewBox="0 0 16 16"><path fill="#4169e1" fill-rule="evenodd" stroke="#4169e1" stroke-width="0.7" stroke-linejoin="round" d="M6.32 3.61 L6.58 1.86 L9.42 1.86 L9.68 3.61 L10.96 4.35 L12.61 3.70 L14.02 6.16 L12.64 7.26 L12.64 8.74 L14.02 9.84 L12.61 12.30 L10.96 11.65 L9.68 12.39 L9.42 14.14 L6.58 14.14 L6.32 12.39 L5.04 11.65 L3.39 12.30 L1.98 9.84 L3.36 8.74 L3.36 7.26 L1.98 6.16 L3.39 3.70 L5.04 4.35 Z M8 5.7 A2.3 2.3 0 1 0 8 10.3 A2.3 2.3 0 1 0 8 5.7 Z"/></svg>
</div></div>
<div class="abs" style="left:1353px;top:2px;width:29px;height:1px;background:#1f55ae"></div>
</body>
</html>
